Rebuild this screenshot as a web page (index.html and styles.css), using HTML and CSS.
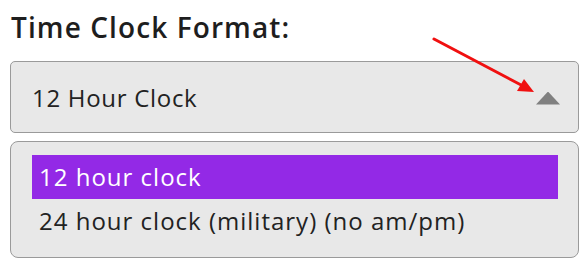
FILE: index.html
```html
<!DOCTYPE html>
<html>
<head>
    <meta charset="UTF-8">
    <title>Time Clock Format</title>
    <link rel="stylesheet" href="styles.css">
</head>
<body>
    <div id="format">
        <h2 class="title">Time Clock Format:</h2>
        <div class="select">
            <span class="value">12 Hour Clock</span>
            <span class="caret"></span>
        </div>
        <ul class="options">
            <li class="active">12 hour clock</li>
            <li>24 hour clock (military) (no am/pm)</li>
        </ul>
        <!-- annotation arrow -->
        <svg class="pointer" width="120" height="70" viewBox="0 0 120 70">
            <line x1="9" y1="9" x2="98" y2="56" stroke="#f01010" stroke-width="3" stroke-linecap="round" />
            <polygon points="109,62 92,61 99,49" fill="#f01010" />
        </svg>
    </div>
</body>
</html>
```

FILE: styles.css
```css
* {
    margin: 0;
    padding: 0;
    box-sizing: border-box;
}
body {
    font-family: "Open Sans", "Liberation Sans", sans-serif;
    color: #222;
    background: #fff;
}
#format {
    position: relative;
    padding: 9px 6px 0 10px;
}
.title {
    font-size: 28px;
    font-weight: 600;
    line-height: 36px;
    padding-left: 1px;
    letter-spacing: 1.1px;
    color: #1e1e1e;
    margin-bottom: 16px;
}
.select {
    display: flex;
    align-items: center;
    justify-content: space-between;
    height: 72px;
    border: 1px solid #9a9a9a;
    border-radius: 5px;
    background: #e8e8e8;
    padding: 0 18px 0 21px;
}
.select .value {
    font-size: 24px;
    letter-spacing: 0.7px;
    color: #222;
}
.caret {
    width: 24px;
    height: 13px;
    background: #808080;
    clip-path: polygon(50% 0, 100% 100%, 0 100%);
    margin-top: 2px;
}
.options {
    list-style: none;
    margin-top: 8px;
    height: 117px;
    border: 1px solid #9a9a9a;
    border-radius: 8px;
    background: #e8e8e8;
    padding: 13px 20px 0 21px;
}
.options li {
    height: 44px;
    line-height: 44px;
    padding-left: 7px;
    font-size: 24px;
    letter-spacing: 1px;
    color: #222;
}
.options li.active {
    background: #9329e6;
    color: #fff;
}
.pointer {
    position: absolute;
    left: 425px;
    top: 30px;
}
```
